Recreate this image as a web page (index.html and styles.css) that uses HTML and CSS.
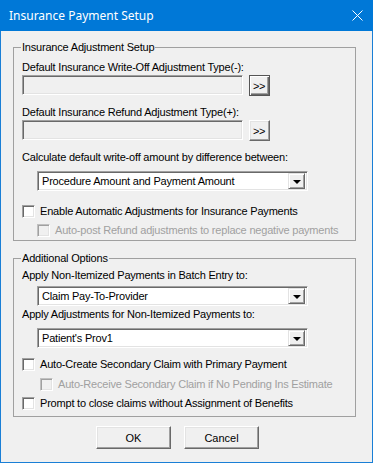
FILE: index.html
```html
<!DOCTYPE html>
<html lang="en">
<head>
    <meta charset="UTF-8">
    <title>Insurance Payment Setup</title>
    <link rel="stylesheet" href="styles.css">
</head>
<body>

<div class="window">
    <div class="titlebar">
        <span class="title">Insurance Payment Setup</span>
        <svg class="close" width="11" height="11" viewBox="0 0 11 11">
            <path d="M0.5 0.5 L10.5 10.5 M10.5 0.5 L0.5 10.5" stroke="#fff" stroke-width="1" fill="none"/>
        </svg>
    </div>

    <div class="client">
        <fieldset class="group group-adjust">
            <legend>Insurance Adjustment Setup</legend>

            <div class="label writeoff-label">Default Insurance Write-Off Adjustment Type(-):</div>
            <div class="lookup writeoff-row">
                <div class="field"></div>
                <button class="pick default-btn">&gt;&gt;</button>
            </div>

            <div class="label refund-label">Default Insurance Refund Adjustment Type(+):</div>
            <div class="lookup refund-row">
                <div class="field"></div>
                <button class="pick">&gt;&gt;</button>
            </div>

            <div class="label calc-label">Calculate default write-off amount by difference between:</div>
            <div class="combo calc-combo">
                <span class="combo-text">Procedure Amount and Payment Amount</span>
                <span class="combo-btn"><span class="arrow"></span></span>
            </div>

            <div class="check enable-check">
                <span class="box"></span>
                <span class="check-text">Enable Automatic Adjustments for Insurance Payments</span>
            </div>
            <div class="check sub-check autopost-check disabled">
                <span class="box"></span>
                <span class="check-text">Auto-post Refund adjustments to replace negative payments</span>
            </div>
        </fieldset>

        <fieldset class="group group-options">
            <legend>Additional Options</legend>

            <div class="label batch-label">Apply Non-Itemized Payments in Batch Entry to:</div>
            <div class="combo batch-combo">
                <span class="combo-text">Claim Pay-To-Provider</span>
                <span class="combo-btn"><span class="arrow"></span></span>
            </div>

            <div class="label adj-label">Apply Adjustments for Non-Itemized Payments to:</div>
            <div class="combo adj-combo">
                <span class="combo-text">Patient's Prov1</span>
                <span class="combo-btn"><span class="arrow"></span></span>
            </div>

            <div class="check secondary-check">
                <span class="box"></span>
                <span class="check-text">Auto-Create Secondary Claim with Primary Payment</span>
            </div>
            <div class="check receive-check disabled">
                <span class="box"></span>
                <span class="check-text">Auto-Receive Secondary Claim if No Pending Ins Estimate</span>
            </div>
            <div class="check prompt-check">
                <span class="box"></span>
                <span class="check-text">Prompt to close claims without Assignment of Benefits</span>
            </div>
        </fieldset>

        <div class="actions">
            <button class="push">OK</button>
            <button class="push">Cancel</button>
        </div>
    </div>
</div>

</body>
</html>
```

FILE: styles.css
```css
* {
    box-sizing: border-box;
}
body {
    margin: 0;
    padding: 0;
    background-color: #f0f0f0;
    font-family: "Liberation Sans", Arial, sans-serif;
    font-size: 11px;
    line-height: 13px;
    letter-spacing: -0.2px;
    color: #000;
}
.window {
    width: 373px;
    height: 463px;
    background-color: #f0f0f0;
    border: 1px solid #1a7fd6;
    border-top: none;
}
.titlebar {
    height: 31px;
    margin: 0 -1px;
    background-color: #0078d7;
    color: #fff;
    display: flex;
    align-items: center;
    justify-content: space-between;
    padding: 0 10px 0 9px;
}
.title {
    font-family: "Noto Sans", sans-serif;
    font-size: 12px;
    letter-spacing: 0;
}
.close {
    display: block;
    margin-top: -1px;
}

/* dialog body */
.client {
    padding-top: 10px;
}
.group {
    margin: 0 16px 0 12px;
    padding: 0 8px;
    border: 1px solid #a0a0a0;
    min-width: 0;
}
.group legend {
    padding: 0 1px;
    margin-left: -1px;
    height: 13px;
}
.group-adjust {
    padding-bottom: 3px;
}
.group-options {
    margin-top: 11px;
    padding-bottom: 6px;
}
.label {
    height: 13px;
    white-space: nowrap;
}

/* sunken / raised edges */
.field, .combo, .box {
    border: 1px solid;
    border-color: #a0a0a0 #fff #fff #a0a0a0;
    box-shadow: inset 1px 1px 0 #696969, inset -1px -1px 0 #e3e3e3;
}
button {
    font-family: "Liberation Sans", Arial, sans-serif;
    font-size: 11px;
    color: #000;
    background-color: #f0f0f0;
    border: 1px solid;
    border-color: #fff #696969 #696969 #fff;
    box-shadow: inset -1px -1px 0 #a0a0a0, inset 1px 1px 0 #e3e3e3;
    padding: 0;
    cursor: pointer;
}

/* lookup fields with >> button */
.lookup {
    display: flex;
    align-items: flex-start;
    gap: 6px;
}
.field {
    width: 221px;
    height: 20px;
    background-color: #f0f0f0;
}
.pick {
    width: 21px;
    height: 21px;
    font-size: 11px;
    letter-spacing: -0.5px;
    padding-right: 1px;
}
.default-btn {
    border: 1px solid #555;
    box-shadow: inset 1px 1px 0 #fff, inset -1px -1px 0 #696969, inset -2px -2px 0 #a0a0a0;
}
.writeoff-label { margin-top: 7px; }
.writeoff-row { margin-top: 1px; }
.refund-label { margin-top: 10px; }
.refund-row { margin-top: 1px; }
.calc-label { margin-top: 10px; }

/* drop-down lists */
.combo {
    width: 271px;
    height: 20px;
    margin-left: 15px;
    background-color: #fff;
    display: flex;
    align-items: center;
    justify-content: space-between;
    padding: 2px 2px 2px 4px;
    white-space: nowrap;
}
.combo-btn {
    width: 17px;
    height: 16px;
    background-color: #f0f0f0;
    border: 1px solid;
    border-color: #e3e3e3 #696969 #696969 #e3e3e3;
    box-shadow: inset 1px 1px 0 #fff, inset -1px -1px 0 #a0a0a0;
    display: flex;
    align-items: center;
    justify-content: center;
}
.arrow {
    width: 0;
    height: 0;
    border-left: 4px solid transparent;
    border-right: 4px solid transparent;
    border-top: 4px solid #000;
    margin-top: 1px;
}
.calc-combo { margin-top: 7px; }
.batch-label { margin-top: 4px; }
.batch-combo { margin-top: 4px; }
.adj-label { margin-top: 2px; }
.adj-combo { margin-top: 7px; }

/* check boxes */
.check {
    display: flex;
    align-items: center;
    height: 13px;
    white-space: nowrap;
}
.box {
    width: 13px;
    height: 13px;
    flex: none;
    background-color: #fff;
    margin-right: 5px;
}
.check.disabled {
    color: #a0a0a0;
}
.check.disabled .box {
    background-color: #f0f0f0;
    border-color: #c0c0c0 #fff #fff #c0c0c0;
    box-shadow: inset 1px 1px 0 #a0a0a0, inset -1px -1px 0 #e3e3e3;
}
.enable-check { margin-top: 14px; }
.autopost-check { margin-top: 6px; margin-left: 15px; }
.secondary-check { margin-top: 10px; }
.receive-check { margin-top: 7px; margin-left: 18px; }
.prompt-check { margin-top: 6px; }

/* OK / Cancel */
.actions {
    display: flex;
    gap: 13px;
    padding-left: 95px;
    margin-top: 9px;
}
.push {
    width: 75px;
    height: 23px;
    letter-spacing: 0;
}
```
